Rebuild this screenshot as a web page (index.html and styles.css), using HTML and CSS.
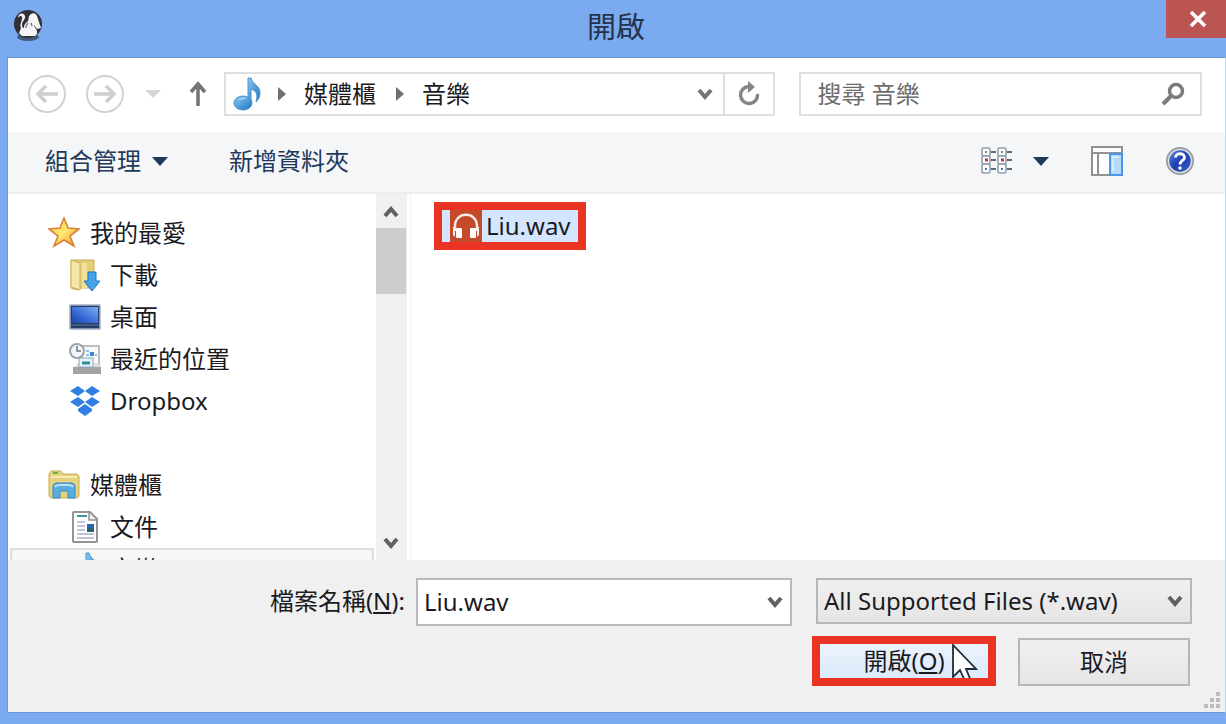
FILE: index.html
```html
<!DOCTYPE html>
<html lang="zh-Hant">
<head>
<meta charset="utf-8">
<title>開啟</title>
<link rel="stylesheet" href="styles.css">
</head>
<body>
<div class="window">
  <header class="titlebar">
    <svg class="app-icon" width="30" height="32" viewBox="0 0 30 32" aria-hidden="true">
      <ellipse cx="15" cy="28" rx="11" ry="4" fill="#43597c"/>
      <circle cx="15" cy="15" r="14" fill="#303136"/>
      <path d="M5 9C5 4 11 3 12 7c1 3-3 5-3 9 0 2 1 3 2 3 0-4 2-5 4-7 1-2 0-5 3-7 4-2 6 1 7 5l3 9-4 1-3-4c0 3 4 4 3 9l-2 2H9l-3-3 2-5c-2-4 2-8 1-11-1-2-3-1-4 1z" fill="#f4f4f4"/>
      <path d="M15 14c-2 2-2 3-2 5M18 14l1 3" stroke="#77787d" stroke-width="1.500" fill="none"/>
    </svg>
    <h1 class="title">開啟</h1>
    <button class="close" type="button" aria-label="關閉">
      <svg width="18" height="16" viewBox="0 0 18 16"><path d="M2 1l14 14M16 1L2 15" stroke="#fff" stroke-width="3.600"/></svg>
    </button>
  </header>

  <main class="dialog">
    <nav class="navbar">
      <button class="round" type="button" aria-label="上一頁">
        <svg width="40" height="40" viewBox="0 0 40 40"><circle cx="20" cy="20" r="18" fill="none" stroke="#d2d2d2" stroke-width="2"/><path d="M31 20H12M19 12l-8 8 8 8" fill="none" stroke="#cfcfcf" stroke-width="3.600"/></svg>
      </button>
      <button class="round" type="button" aria-label="下一頁">
        <svg width="40" height="40" viewBox="0 0 40 40"><circle cx="20" cy="20" r="18" fill="none" stroke="#d2d2d2" stroke-width="2"/><path d="M9 20h19M21 12l8 8-8 8" fill="none" stroke="#cfcfcf" stroke-width="3.600"/></svg>
      </button>
      <button class="recent" type="button" aria-label="最近的位置">
        <svg width="16" height="8" viewBox="0 0 16 8"><path d="M0 0h16L8 8z" fill="#d6d6d6"/></svg>
      </button>
      <button class="up" type="button" aria-label="上一層">
        <svg width="18" height="26" viewBox="0 0 18 26"><path d="M9 25V3M2 11l7-8 7 8" fill="none" stroke="#757575" stroke-width="3.600"/></svg>
      </button>
      <div class="address">
        <svg class="note" width="28" height="34" viewBox="0 0 28 34" aria-hidden="true">
          <defs><linearGradient id="note" x1="0" y1="0" x2="1" y2="1"><stop offset="0" stop-color="#8ccaf3"/><stop offset="1" stop-color="#1b72c6"/></linearGradient></defs>
          <path d="M15 1h3c1 6 9 7 9 15 0 4-2 7-4 9 2-7 1-11-5-13v13h-3z" fill="url(#note)" stroke="#4a94d0"/>
          <ellipse cx="10" cy="26" rx="9" ry="7" fill="url(#note)" stroke="#3f8dcc"/>
          <path d="M4 23c2-3 7-4 10-2-3 2-7 3-10 2z" fill="#8fc8ef"/>
        </svg>
        <svg class="sep" width="8" height="14" viewBox="0 0 8 14" aria-hidden="true"><path d="M0 0l8 7-8 7z" fill="#6f6f6f"/></svg>
        <a class="crumb" href="#library">媒體櫃</a>
        <svg class="sep" width="8" height="14" viewBox="0 0 8 14" aria-hidden="true"><path d="M0 0l8 7-8 7z" fill="#6f6f6f"/></svg>
        <a class="crumb" href="#music">音樂</a>
        <button class="history" type="button" aria-label="先前的位置">
          <svg width="16" height="13" viewBox="0 0 16 13"><path d="M2 2l6 7 6-7" fill="none" stroke="#747474" stroke-width="4"/></svg>
        </button>
        <button class="refresh" type="button" aria-label="重新整理">
          <svg width="24" height="26" viewBox="0 0 24 26"><path d="M20.500 13a8.500 8.500 0 1 1-9-7.500" fill="none" stroke="#858585" stroke-width="3.500"/><path d="M11 0l7 6-7 6z" fill="#858585"/></svg>
        </button>
      </div>
      <div class="search">
        <input class="search-input" type="search" placeholder="搜尋 音樂" aria-label="搜尋 音樂">
        <svg width="24" height="24" viewBox="0 0 24 24" aria-hidden="true"><circle cx="15" cy="9" r="6.500" fill="none" stroke="#7b7b7b" stroke-width="3.500"/><path d="M10 14l-8 8" stroke="#7b7b7b" stroke-width="4"/></svg>
      </div>
    </nav>

    <div class="toolbar">
      <button class="tool organize" type="button">組合管理
        <svg width="16" height="9" viewBox="0 0 16 9" aria-hidden="true"><path d="M0 0h16L8 9z" fill="#1e395b"/></svg>
      </button>
      <button class="tool" type="button">新增資料夾</button>
      <div class="tool-icons">
        <button class="tool views" type="button" aria-label="變更檢視">
          <svg width="32" height="28" viewBox="0 0 32 28">
            <g fill="#fff" stroke="#8f9cae" stroke-width="1.600">
              <rect x="1" y="1" width="8" height="8" rx="1.500"/><rect x="1" y="9" width="8" height="8" rx="1.500"/><rect x="1" y="17" width="8" height="9" rx="1.500"/>
              <rect x="17" y="1" width="8" height="8" rx="1.500"/><rect x="17" y="9" width="8" height="8" rx="1.500"/><rect x="17" y="17" width="8" height="9" rx="1.500"/>
            </g>
            <path d="M10 5h5M10 13h5M10 22h5M26 5h5M26 13h5M26 22h5" stroke="#5e6a7c" stroke-width="2"/>
            <path d="M4 5h2M20 5h2" stroke="#6d8a6d" stroke-width="2"/>
            <path d="M4 13h3M20 13h3" stroke="#cf3a2c" stroke-width="3"/>
            <path d="M4 22h2M20 22h2" stroke="#3c76c4" stroke-width="2"/>
          </svg>
          <svg width="16" height="9" viewBox="0 0 16 9"><path d="M0 0h16L8 9z" fill="#1e395b"/></svg>
        </button>
        <button class="tool" type="button" aria-label="預覽窗格">
          <svg width="32" height="30" viewBox="0 0 32 30">
            <rect x="1" y="1" width="30" height="28" fill="#fff" stroke="#929292" stroke-width="2"/>
            <path d="M1 7h30M7 7v22" stroke="#929292" stroke-width="2"/>
            <rect x="19" y="8" width="12" height="21" fill="#b5dafb" stroke="#4b96ea" stroke-width="2"/>
            <path d="M22 25V11h6" stroke="#d4eafd" stroke-width="2" fill="none"/>
          </svg>
        </button>
        <button class="tool" type="button" aria-label="取得說明">
          <svg width="30" height="30" viewBox="0 0 30 30">
            <defs><linearGradient id="help" x1="0" y1="0" x2="1" y2="1"><stop offset="0" stop-color="#6588e0"/><stop offset=".5" stop-color="#1b3eb0"/><stop offset="1" stop-color="#3b63cf"/></linearGradient></defs>
            <circle cx="15" cy="15" r="14" fill="#999ca0"/><circle cx="15" cy="15" r="11.500" fill="url(#help)" stroke="#dcdee3" stroke-width="1.500"/>
            <path d="M10.500 11.500c0-5 9-5 9 0 0 3-4.500 3-4.500 7" fill="none" stroke="#fff" stroke-width="2.800"/><circle cx="15" cy="22" r="1.800" fill="#fff"/>
          </svg>
        </button>
      </div>
    </div>

    <div class="browser">
      <ul class="tree">
        <li class="node">
          <svg width="32" height="32" viewBox="0 0 32 32" aria-hidden="true">
            <defs><linearGradient id="star" x1="0" y1="0" x2="1" y2="1"><stop offset="0" stop-color="#ffc93c"/><stop offset=".5" stop-color="#ffe873"/><stop offset="1" stop-color="#f0901c"/></linearGradient></defs>
            <path d="M16 1l4 10 11 1-9 7 4 10-10-6-10 6 4-10-9-7 11-1z" fill="url(#star)" stroke="#d88138" stroke-width="1.600"/>
          </svg>
          <span>我的最愛</span>
        </li>
        <li class="node child">
          <svg width="32" height="34" viewBox="0 0 32 34" aria-hidden="true">
            <path d="M2 2h23v28H12l-4 2-6-2z" fill="#e5cd78" stroke="#c7ab52"/><path d="M2 2l9 3v27l-9-3z" fill="#f5e6a3" stroke="#c9b260"/><path d="M13 5h5v25h-5z" fill="#f1e09a"/>
            <path d="M19 14h8v9h4l-8 10-8-10h4z" fill="#44a4e8" stroke="#2374b9"/>
          </svg>
          <span>下載</span>
        </li>
        <li class="node child">
          <svg width="32" height="28" viewBox="0 0 32 28" aria-hidden="true">
            <defs><linearGradient id="desk" x1="0" y1="1" x2="1" y2="0"><stop offset="0" stop-color="#2144a0"/><stop offset=".4" stop-color="#3568d4"/><stop offset="1" stop-color="#7bb0f3"/></linearGradient></defs>
            <rect x="1" y="2" width="30" height="24" fill="#253e68" stroke="#a8b4c8" stroke-width="1.500"/><rect x="3" y="4" width="26" height="16" fill="url(#desk)"/><path d="M2 22h28" stroke="#60769c"/>
          </svg>
          <span>桌面</span>
        </li>
        <li class="node child">
          <svg width="32" height="32" viewBox="0 0 32 32" aria-hidden="true">
            <path d="M13 3h17v22H13z" fill="#f9fafb" stroke="#a6a9ac" stroke-width="1.500"/><path d="M17 8h3M17 12h3M26 12h2" stroke="#8fc0ea" stroke-width="2"/><rect x="21" y="9" width="4" height="4" fill="#3b85e0"/>
            <path d="M4 24h28v7H4z" fill="#a1a3a5"/><path d="M6 24l3-4h20l3 4z" fill="#dddfe0"/>
            <rect x="10" y="15" width="14" height="9" fill="#e8f3fb" stroke="#8ea5b8"/><path d="M13 20h8" stroke="#2d8f93" stroke-width="3"/>
            <circle cx="8" cy="8" r="7" fill="#f3f6f8" stroke="#9ba4ac" stroke-width="2"/><path d="M8 3v5h4" fill="none" stroke="#67747f" stroke-width="1.500"/>
          </svg>
          <span>最近的位置</span>
        </li>
        <li class="node child">
          <svg width="32" height="30" viewBox="0 0 32 30" aria-hidden="true">
            <path d="M9 0l7 5-7 5-8-5zM23 0l8 5-8 5-7-5zM9 11l7 5-7 5-8-5zM23 11l8 5-8 5-7-5zM16 18l7 5v2l-7 5-7-5v-2z" fill="#2f80e2"/>
          </svg>
          <span>Dropbox</span>
        </li>
        <li class="node gap">
          <svg width="32" height="30" viewBox="0 0 32 30" aria-hidden="true">
            <path d="M1 4l2-3h10l2 3h14l2 2v20l-2 2H3l-2-2z" fill="#e7d37f" stroke="#c6ae57"/><path d="M3 7h26" stroke="#f8ecb6" stroke-width="2"/><path d="M5 3h5" stroke="#5fb844" stroke-width="2"/>
            <path d="M5 28V17c0-2 1-4 4-4h14c3 0 4 2 4 4v11h-7v-7h-8v7z" fill="#59ade0" stroke="#3689c3"/><path d="M7 17c1-2 2-2 4-2h10c2 0 3 0 4 2" fill="none" stroke="#bce5f8" stroke-width="2"/>
          </svg>
          <span>媒體櫃</span>
        </li>
        <li class="node child">
          <svg width="32" height="34" viewBox="0 0 32 34" aria-hidden="true">
            <path d="M5 2h16l7 7v22q0 1-1 1H5q-1 0-1-1V3q0-1 1-1z" fill="#fff" stroke="#949494" stroke-width="2"/><path d="M20 3v7h7" fill="#eee" stroke="#949494" stroke-width="1.500"/>
            <path d="M8 6h10" stroke="#3c94a0" stroke-width="2"/><path d="M8 12h8M8 16h8M8 20h8M8 24h17M8 28h17" stroke="#a9aed2" stroke-width="1.500"/><rect x="18" y="14" width="7" height="8" fill="#2a65aa"/><path d="M18 20l3-2 4 2v2h-7z" fill="#315f64"/>
          </svg>
          <span>文件</span>
        </li>
        <li class="node child selected">
          <svg width="32" height="34" viewBox="0 0 28 34" aria-hidden="true">
            <path d="M15 1h3c1 6 9 7 9 15 0 4-2 7-4 9 2-7 1-11-5-13v13h-3z" fill="url(#note)" stroke="#4a94d0"/><ellipse cx="10" cy="26" rx="9" ry="7" fill="url(#note)"/>
          </svg>
          <span>音樂</span>
        </li>
      </ul>
      <div class="scrollbar">
        <button class="scroll-btn" type="button" aria-label="向上捲動"><svg width="16" height="13" viewBox="0 0 16 13"><path d="M2 11l6-7 6 7" fill="none" stroke="#606060" stroke-width="4"/></svg></button>
        <div class="thumb"></div>
        <button class="scroll-btn" type="button" aria-label="向下捲動"><svg width="16" height="13" viewBox="0 0 16 13"><path d="M2 2l6 7 6-7" fill="none" stroke="#606060" stroke-width="4"/></svg></button>
      </div>
      <div class="files">
        <button class="file" type="button">
          <svg width="32" height="32" viewBox="0 0 32 32" aria-hidden="true">
            <rect width="32" height="32" fill="#c34a2b"/><path d="M5 21v-5c0-15 22-15 22 0v5" fill="none" stroke="#fbe9e4" stroke-width="2.500"/><path d="M3 17l2 0v10l-2-2zM29 17h-2v10l2-2z" fill="#fbe9e4"/><rect x="6" y="18" width="6" height="10" rx="1" fill="#fff"/><rect x="20" y="18" width="6" height="10" rx="1" fill="#fff"/>
          </svg>
          <span>Liu.wav</span>
        </button>
      </div>
    </div>

    <form class="footer">
      <div class="fields">
        <label class="name-label" for="filename">檔案名稱(<u>N</u>):</label>
        <div class="combo">
          <input class="name-input" id="filename" type="text" value="Liu.wav">
          <button class="combo-btn" type="button" aria-label="顯示清單"><svg width="16" height="13" viewBox="0 0 16 13"><path d="M2 2l6 7 6-7" fill="none" stroke="#606060" stroke-width="4"/></svg></button>
        </div>
        <div class="filter">
          <select class="type-select" aria-label="檔案類型"><option>All Supported Files (*.wav)</option></select>
          <svg class="filter-arrow" width="16" height="13" viewBox="0 0 16 13" aria-hidden="true"><path d="M2 2l6 7 6-7" fill="none" stroke="#606060" stroke-width="4"/></svg>
        </div>
      </div>
      <div class="actions">
        <button class="open" type="button">開啟(<u>O</u>)
          <svg class="cursor" width="26" height="36" viewBox="0 0 26 36" aria-hidden="true"><path d="M1 1v32l7-7 5 11h6l-5-12h10z" fill="#fff" stroke="#222a3c" stroke-width="1.800"/></svg>
        </button>
        <button class="cancel" type="button">取消</button>
      </div>
      <svg class="grip" width="18" height="18" viewBox="0 0 18 18" aria-hidden="true"><path d="M13 1h4v4h-4zM13 7h4v4h-4zM13 13h4v4h-4zM7 7h4v4H7zM7 13h4v4H7zM1 13h4v4H1z" fill="#bdbdbd"/></svg>
    </form>
  </main>
</div>
</body>
</html>
```
FILE: styles.css
```css
* { box-sizing: border-box; }

body {
  margin: 0;
  background: #7aabf0;
  color: #1b1b1f;
  font-family: "Noto Sans", "Noto Sans CJK TC", sans-serif;
  font-size: 24px;
  line-height: 32px;
}

button, input, select {
  margin: 0;
  padding: 0;
  border: 0;
  background: none;
  color: inherit;
  font: inherit;
}

svg { display: block; flex: none; }

u { text-decoration-thickness: 2px; text-underline-offset: 2px; }

.window {
  display: flex;
  flex-direction: column;
  height: 100vh;
  padding-bottom: 11px;
}

/* Title bar */
.titlebar {
  display: grid;
  grid-template-columns: 1fr auto 1fr;
  height: 57px;
  padding-left: 6px;
}
.app-icon { margin: 9px 0 0 7px; }
.title {
  margin: 0;
  font-size: 29px;
  font-weight: 400;
  line-height: 54px;
  color: #25324a;
}
.close {
  display: flex;
  justify-content: center;
  align-items: center;
  justify-self: end;
  width: 60px;
  height: 38px;
  padding-left: 4px;
  background: #bb5552;
}

.dialog {
  display: flex;
  flex: 1;
  flex-direction: column;
  min-height: 0;
  margin-left: 7px;
  border: 1px solid #6b96d4;
  border-right-color: #c3d3f0;
  background: #fff;
}

/* Navigation row */
.navbar {
  display: flex;
  align-items: center;
  padding: 14px 23px 16px 19px;
}
.round { margin-right: 18px; }
.recent { margin: 0 28px 0 2px; }
.up { margin-right: 17px; }
.address {
  display: flex;
  flex: 25;
  align-items: center;
  height: 44px;
  margin-right: 24px;
  padding-left: 7px;
  border: 2px solid #dfdfdf;
}
.note { margin-right: 17px; }
.crumb {
  margin: 0 20px 0 18px;
  color: inherit;
  text-decoration: none;
}
.history { margin-left: auto; padding: 12px 10px; }
.refresh {
  align-self: stretch;
  padding: 0 12px;
  border-left: 2px solid #dfdfdf;
}
.search {
  display: flex;
  flex: 17;
  align-items: center;
  min-width: 0;
  height: 44px;
  padding: 0 15px 0 16px;
  border: 2px solid #dfdfdf;
}
.search-input { flex: 1; min-width: 0; outline: 0; }
.search-input::placeholder { color: #6d6d6d; opacity: 1; }

/* Command bar */
.toolbar {
  display: flex;
  align-items: center;
  height: 62px;
  padding: 0 30px 2px 37px;
  border-bottom: 2px solid #ebedef;
  background: #f4f6f8;
  color: #1e395b;
}
.tool { display: flex; align-items: center; }
.organize { gap: 11px; margin-right: 61px; }
.tool-icons { display: flex; align-items: center; gap: 42px; margin-left: auto; }
.views { gap: 20px; }

/* Folder tree and file list */
.browser { display: flex; flex: 1; min-height: 0; }
.tree {
  width: 368px;
  margin: 0;
  padding: 18px 2px 0;
  overflow: hidden;
  list-style: none;
}
.node {
  display: flex;
  align-items: center;
  gap: 10px;
  height: 42px;
  padding-left: 38px;
}
.child { gap: 9px; padding-left: 59px; }
.gap { margin-top: 42px; }
.selected { border: 2px solid #dedede; background: #f7f7f7; padding-left: 57px; }
.scrollbar {
  display: flex;
  flex-direction: column;
  width: 31px;
  padding-right: 1px;
  background: #f0f0f0;
}
.scroll-btn {
  display: flex;
  justify-content: center;
  align-items: center;
  height: 34px;
}
.scroll-btn:last-child { margin-top: auto; }
.thumb { height: 66px; background: #cdcdcd; }
.files {
  flex: 1;
  margin-left: 3px;
  padding: 8px 23px;
  border-left: 1px solid #f4f4f4;
}
.file {
  display: flex;
  align-items: center;
  gap: 4px;
  padding: 0 7px 0 8px;
  border: 8px solid #e93323;
  background: #d3e6fd;
}

/* File name and actions */
.footer {
  position: relative;
  padding: 18px 33px 26px 0;
  background: #f0f0f0;
}
.fields {
  display: grid;
  grid-template-columns: 408px minmax(0, 1fr) minmax(0, 1fr);
  align-items: start;
}
.name-label { padding-right: 11px; text-align: right; line-height: 46px; }
.combo {
  display: flex;
  height: 48px;
  margin-right: 12px;
  border: 2px solid #b9bac0;
  background: #fff;
}
.name-input { flex: 1; min-width: 0; padding-left: 6px; outline: 0; }
.combo-btn { padding: 0 7px; }
.filter { position: relative; margin-left: 12px; }
.type-select {
  width: 100%;
  height: 46px;
  padding-left: 6px;
  border: 2px solid #b7b7b7;
  border-radius: 0;
  background: linear-gradient(#f0f0f0, #e5e5e5);
  appearance: none;
}
.filter-arrow { position: absolute; right: 9px; top: 17px; pointer-events: none; }
.actions {
  display: flex;
  justify-content: flex-end;
  align-items: flex-end;
  gap: 22px;
  margin: 10px 2px 0 0;
}
.open {
  position: relative;
  width: 184px;
  height: 50px;
  border: 8px solid #e93323;
  background: linear-gradient(#ebf3fc, #dceafb);
  overflow: hidden;
}
.cursor { position: absolute; left: 132px; top: 0; }
.cancel {
  width: 172px;
  height: 48px;
  border: 2px solid #b7b7b7;
  background: linear-gradient(#f0f0f0, #e5e5e5);
}
.grip { position: absolute; right: 4px; bottom: 3px; }
```
